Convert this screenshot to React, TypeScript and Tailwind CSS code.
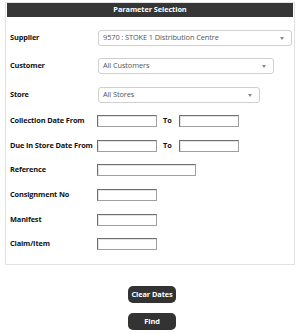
import React from "react";

const font = { fontFamily: '"Open Sans", "Noto Sans", sans-serif' };

function Select({ value, w }: { value: string; w: string }) {
  return (
    <div
      className={`ml-px h-[16px] ${w} rounded-[3px] border border-[#cfcfcf] bg-white flex items-center justify-between pl-[4px] pr-[7px] text-[7.4px] tracking-[-0.1px] text-[#555]`}
    >
      <span>{value}</span>
      <span className="w-0 h-0 border-l-[2.5px] border-r-[2.5px] border-t-[3px] border-l-transparent border-r-transparent border-t-[#888]" />
    </div>
  );
}

function Input({ w }: { w: string }) {
  return (
    <div
      className={`h-[12px] ${w} border border-t-[#6f6f6f] border-l-[#6f6f6f] border-b-[#a0a0a0] border-r-[#a0a0a0] bg-white shadow-[inset_1px_1px_0_#e3e3e3]`}
    />
  );
}

function Label({ children }: { children: React.ReactNode }) {
  return (
    <div className="w-[90px] shrink-0 pl-[3px] text-[7.4px] tracking-[-0.15px] font-bold text-[#111] whitespace-nowrap">
      {children}
    </div>
  );
}

function Row({ label, mt, children }: { label: string; mt: string; children: React.ReactNode }) {
  return (
    <div className={`flex items-center ${mt}`}>
      <Label>{label}</Label>
      {children}
    </div>
  );
}

function DateRow({ label, mt }: { label: string; mt: string }) {
  return (
    <Row label={label} mt={mt}>
      <Input w="w-[60px]" />
      <div className="w-[22px] pl-[6px] text-[7.4px] font-bold text-[#111]">To</div>
      <Input w="w-[60px]" />
    </Row>
  );
}

export default function App() {
  return (
    <div className="w-[300px] h-[335px] bg-white pt-[2px]" style={font}>
      <div className="ml-[5px] w-[290px] border border-[#e2e2e2] px-px pb-[14px]">
        <div className="h-[14px] bg-[#363636] flex items-center justify-center text-[7.4px] tracking-[-0.1px] font-bold text-white">
          Parameter Selection
        </div>
        <div className="flex flex-col">
          <Row label="Supplier" mt="mt-[13px]">
            <Select value="9570 : STOKE 1 Distribution Centre" w="w-[194px]" />
          </Row>
          <Row label="Customer" mt="mt-[12px]">
            <Select value="All Customers" w="w-[176px]" />
          </Row>
          <Row label="Store" mt="mt-[13px]">
            <Select value="All Stores" w="w-[162px]" />
          </Row>
          <DateRow label="Collection Date From" mt="mt-[12px]" />
          <DateRow label="Due In Store Date From" mt="mt-[13px]" />
          <Row label="Reference" mt="mt-[12px]">
            <Input w="w-[99px]" />
          </Row>
          <Row label="Consignment No" mt="mt-[13px]">
            <Input w="w-[60px]" />
          </Row>
          <Row label="Manifest" mt="mt-[13px]">
            <Input w="w-[60px]" />
          </Row>
          <Row label="Claim/Item" mt="mt-[12px]">
            <Input w="w-[60px]" />
          </Row>
        </div>
      </div>
      <div className="flex flex-col items-center mt-[21px] gap-[10px] pl-[4px]">
        <button className="w-[48px] h-[17px] rounded-[5px] bg-[#333333] text-white text-[7.4px] tracking-[-0.1px] font-bold">
          Clear Dates
        </button>
        <button className="w-[48px] h-[17px] rounded-[5px] bg-[#333333] text-white text-[7.4px] tracking-[-0.1px] font-bold">
          Find
        </button>
      </div>
    </div>
  );
}
